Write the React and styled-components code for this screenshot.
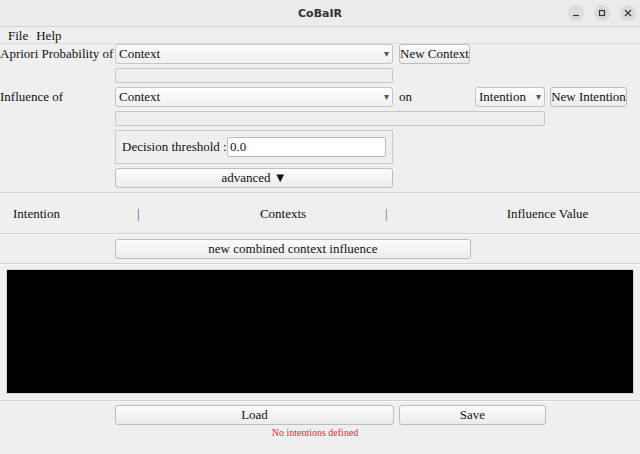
import * as React from "react"
import styled, { createGlobalStyle } from "styled-components"

const Global = createGlobalStyle`
  html, body { margin: 0; padding: 0; background: #efefef; }
  body { font-family: "Liberation Serif", "Times New Roman", serif; }
`

const App = () => {
  return (
    <Window>
      <Global />
      <TitleBar>
        <WinTitle>CoBaIR</WinTitle>
        <WinButtons>
          <WinBtn>
            <svg width="8" height="8" viewBox="0 0 8 8"><path d="M1 6.5h6" stroke="#333" strokeWidth="1.2" /></svg>
          </WinBtn>
          <WinBtn>
            <svg width="8" height="8" viewBox="0 0 8 8"><rect x="1.5" y="1.5" width="5" height="5" fill="none" stroke="#333" strokeWidth="1.2" /></svg>
          </WinBtn>
          <WinBtn>
            <svg width="8" height="8" viewBox="0 0 8 8"><path d="M1 1l6 6M7 1l-6 6" stroke="#333" strokeWidth="1.2" /></svg>
          </WinBtn>
        </WinButtons>
      </TitleBar>
      <MenuBar>
        <MenuItem>File</MenuItem>
        <MenuItem>Help</MenuItem>
      </MenuBar>

      <Form>
        <Row>
          <Label>Apriori Probability of</Label>
          <Combo w={278}>Context<Arrow>▾</Arrow></Combo>
          <Button w={71} ml={6}>New Context</Button>
        </Row>
        <Row mt={4}>
          <Field w={278} />
        </Row>
        <Row mt={4}>
          <Label>Influence of</Label>
          <Combo w={278}>Context<Arrow>▾</Arrow></Combo>
          <OnText>on</OnText>
          <Combo w={70}>Intention<Arrow>▾</Arrow></Combo>
          <Button w={77} ml={5}>New Intention</Button>
        </Row>
        <Row mt={4}>
          <Field w={430} />
        </Row>
        <Row mt={4}>
          <Frame>
            <span>Decision threshold :</span>
            <Input defaultValue="0.0" />
          </Frame>
        </Row>
        <Row mt={4}>
          <Button w={278} h={20}>advanced ▼</Button>
        </Row>
      </Form>

      <Separator mt={4} />
      <Header>
        <HeadCell w={137} pl={13}>Intention</HeadCell>
        <Bar c="#3a4d6e">|</Bar>
        <HeadCell w={244} pl={40} center>Contexts</HeadCell>
        <Bar c="#7a5a30">|</Bar>
        <HeadCell w={251} pl={66} center>Influence Value</HeadCell>
      </Header>
      <Separator />

      <Row mt={4}>
        <Button w={356} h={20}>new combined context influence</Button>
      </Row>
      <Separator mt={4} />

      <Canvas />
      <Separator mt={6} />

      <Row mt={3}>
        <Button w={279} h={20}>Load</Button>
        <Button w={147} h={20} ml={5}>Save</Button>
      </Row>
      <Status>No intentions defined</Status>
    </Window>
  )
}

export default App

const Window = styled.div`
  width: 640px;
  height: 454px;
  background: #efefef;
  display: flex;
  flex-direction: column;
  overflow: hidden;
  font-family: "Liberation Serif", "Times New Roman", serif;
  font-size: 13px;
  color: #111;
`

const TitleBar = styled.div`
  height: 26px;
  flex-shrink: 0;
  background: #ebebeb;
  border-bottom: 1px solid #d4d4d4;
  display: flex;
  align-items: center;
  justify-content: center;
  position: relative;
`

const WinTitle = styled.div`
  font-family: "DejaVu Sans", "Noto Sans", sans-serif;
  font-weight: bold;
  font-size: 11px;
  color: #333;
`

const WinButtons = styled.div`
  position: absolute;
  right: 4px;
  top: 5px;
  display: flex;
  gap: 10px;
`

const WinBtn = styled.div`
  width: 16px;
  height: 16px;
  border-radius: 50%;
  background: #dcdcdc;
  display: flex;
  align-items: center;
  justify-content: center;
`

const MenuBar = styled.div`
  height: 17px;
  flex-shrink: 0;
  display: flex;
  align-items: center;
  padding: 1px 0 0 8px;
  box-sizing: border-box;
  gap: 8px;
  border-bottom: 1px solid #dcdcdc;
`

const MenuItem = styled.span`
  font-size: 13px;
`

const Form = styled.div`
  display: flex;
  flex-direction: column;
`

const Row = styled.div`
  display: flex;
  align-items: center;
  padding-left: 115px;
  margin-top: ${(p) => p.mt || 0}px;
  position: relative;
`

const Label = styled.span`
  position: absolute;
  left: 0;
  top: 0;
  height: 20px;
  line-height: 20px;
`

const Combo = styled.div`
  width: ${(p) => p.w}px;
  height: 20px;
  box-sizing: border-box;
  border: 1px solid #c4c4c4;
  border-radius: 3px;
  background: linear-gradient(#fdfdfd, #f0f0f0);
  padding-left: 3px;
  line-height: 18px;
  position: relative;
`

const Arrow = styled.span`
  position: absolute;
  right: 3px;
  top: 0;
  font-size: 10px;
  color: #555;
  font-family: "DejaVu Sans", sans-serif;
`

const Button = styled.div`
  width: ${(p) => p.w}px;
  height: ${(p) => p.h || 20}px;
  margin-left: ${(p) => p.ml || 0}px;
  box-sizing: border-box;
  border: 1px solid #bdbdbd;
  border-radius: 3px;
  background: linear-gradient(#fcfcfc, #ececec);
  display: flex;
  align-items: center;
  justify-content: center;
  white-space: nowrap;
`

const Field = styled.div`
  width: ${(p) => p.w}px;
  height: 15px;
  box-sizing: border-box;
  border: 1px solid #c8c8c8;
  border-radius: 2px;
  background: #eeeeee;
`

const OnText = styled.span`
  width: 82px;
  padding-left: 6px;
  box-sizing: border-box;
`

const Frame = styled.div`
  width: 278px;
  height: 34px;
  box-sizing: border-box;
  border: 1px solid #cacaca;
  display: flex;
  align-items: center;
  justify-content: space-between;
  padding: 0 6px;
`

const Input = styled.input`
  width: 159px;
  height: 20px;
  box-sizing: border-box;
  border: 1px solid #bcbcbc;
  border-radius: 2px;
  background: #fff;
  font-family: inherit;
  font-size: 13px;
  color: #111;
  padding: 0 2px;
  outline: none;
`

const Separator = styled.div`
  margin-top: ${(p) => p.mt || 0}px;
  border-top: 1px solid #d2d2d2;
  border-bottom: 1px solid #f9f9f9;
`

const Header = styled.div`
  height: 39px;
  display: flex;
  align-items: center;
`

const HeadCell = styled.div`
  width: ${(p) => p.w}px;
  box-sizing: border-box;
  padding-left: ${(p) => p.pl}px;
  text-align: ${(p) => (p.center ? "center" : "left")};
`

const Bar = styled.span`
  width: 4px;
  color: ${(p) => p.c};
`

const Canvas = styled.div`
  margin: 4px 6px 0 6px;
  height: 123px;
  background: #000;
  border: 1px solid #d8d8d8;
`

const Status = styled.div`
  margin-top: 2px;
  text-align: center;
  padding-right: 10px;
  font-size: 10px;
  color: #e8282e;
`
